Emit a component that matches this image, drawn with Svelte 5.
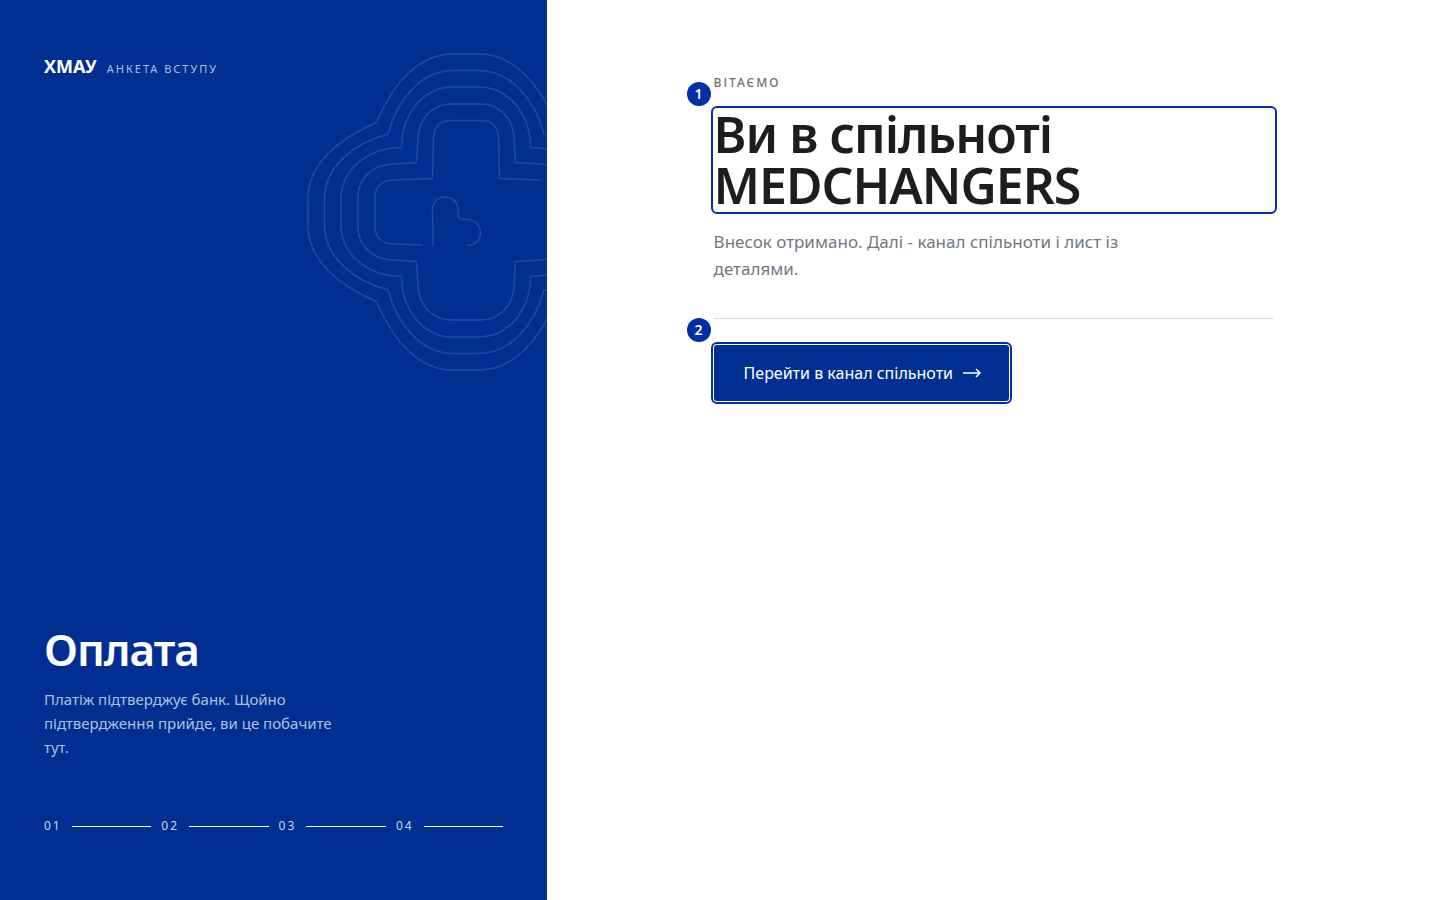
<script lang="ts">
  const steps = ['01', '02', '03', '04'];

  // one quarter of each closed ring, mirrored into the other three
  const rings = [
    'M-158 0V-13C-158-48-128-73-89.5-89.5C-73-128-48-158-13-158H0',
    'M-141.5 0V-13C-141.5-45-112-69-78-78C-69-112-45-141.5-13-141.5H0',
    'M-125 0V-13C-125-42-99-64-64.5-64.5C-64-99-42-125-13-125H0',
    'M-108 0V-15C-108-33-94-47-74-48L-49.5-49.5L-48-74C-47-94-33-108-15-108H0',
  ];
  const mirrors = ['1 1', '-1 1', '1 -1', '-1 -1'];
</script>

<div class="layout">
  <aside class="panel">
    <svg class="mark" viewBox="-159 -159 318 318" aria-hidden="true">
      {#each mirrors as mirror}
        <g transform="scale({mirror})">
          {#each rings as d}
            <path {d} />
          {/each}
        </g>
      {/each}
      <path d="M-43.5 33L-74 32C-84 31.500-91 25-91 15V-15C-91-25-84-31.500-74-32L-33.500-33.500L-32.500-74C-32-85-26-91.500-15-91.500H15C26-91.500 32-85 32.500-74L33.500-33.500L74.500-32" />
      <path d="M-33 33.500L-33.500-2C-33.500-10-28-15-21-15C-13-15-8-9-8-2V2C-8 6-6 8-2 7.500C7 6 14.500 12 14.500 20.500C14.500 28 9 33 1 33.500" />
    </svg>

    <header class="brand">
      <span class="brand-name">ХМАУ</span>
      <span class="brand-note">АНКЕТА ВСТУПУ</span>
    </header>

    <div class="stage">
      <h2>Оплата</h2>
      <p>Платіж підтверджує банк. Щойно підтвердження прийде, ви це побачите тут.</p>
      <ol class="steps">
        {#each steps as step}
          <li>{step}</li>
        {/each}
      </ol>
    </div>
  </aside>

  <main class="content">
    <div class="column">
      <p class="eyebrow">ВІТАЄМО</p>
      <div class="marked">
        <span class="badge">1</span>
        <h1>Ви в спільноті MEDCHANGERS</h1>
      </div>
      <p class="lead">Внесок отримано. Далі - канал спільноти і лист із деталями.</p>
      <div class="actions">
        <div class="marked">
          <span class="badge">2</span>
          <a class="cta" href="#channel">
            Перейти в канал спільноти
            <svg viewBox="0 0 18 10" width="18" height="10" aria-hidden="true">
              <path d="M0 5H17M13 1L17 5L13 9" />
            </svg>
          </a>
        </div>
      </div>
    </div>
  </main>
</div>

<style>
  :global(body) {
    margin: 0;
    background: #fff;
  }
  .layout {
    display: grid;
    grid-template-columns: 38% 1fr;
    min-height: 100vh;
    font-family: 'Noto Sans', 'Open Sans', sans-serif;
    color: #1d1d1b;
  }
  h1, h2, p, ol {
    margin: 0;
  }

  .panel {
    position: relative;
    overflow: hidden;
    box-sizing: border-box;
    display: flex;
    flex-direction: column;
    justify-content: space-between;
    padding: 52px 44px 64px;
    background: #002f91;
    color: #fff;
  }
  .mark {
    position: absolute;
    top: 53px;
    right: -78px;
    width: 318px;
    height: 318px;
    fill: none;
    stroke: #fff;
    stroke-width: 1.5;
    opacity: 0.13;
  }
  .brand {
    display: flex;
    align-items: baseline;
    gap: 10px;
    line-height: 28px;
  }
  .brand-name {
    font-size: 18px;
    font-weight: 700;
  }
  .brand-note {
    font-size: 11px;
    letter-spacing: 2px;
    color: rgba(255, 255, 255, 0.7);
  }
  h2 {
    font-size: 44px;
    line-height: 48px;
    font-weight: 600;
    letter-spacing: -1px;
  }
  .stage p {
    max-width: 300px;
    margin-top: 14px;
    font-size: 15px;
    line-height: 24px;
    color: rgba(255, 255, 255, 0.7);
  }
  .steps {
    display: flex;
    gap: 10px;
    margin-top: 57px;
    padding: 0;
    list-style: none;
    font-size: 12px;
    line-height: 20px;
    letter-spacing: 2px;
    color: rgba(255, 255, 255, 0.8);
  }
  .steps li {
    flex: 1;
    display: flex;
    align-items: center;
    gap: 10px;
  }
  .steps li::after {
    content: '';
    flex: 1;
    height: 1px;
    background: #fff;
  }

  .content {
    padding: 73px 44px;
  }
  .column {
    max-width: 560px;
    margin: 0 auto;
  }
  .eyebrow {
    margin-bottom: 16px;
    font-size: 12px;
    line-height: 20px;
    font-weight: 500;
    letter-spacing: 2px;
    color: #6b6f78;
  }
  .marked {
    position: relative;
  }
  .badge {
    position: absolute;
    right: 100%;
    bottom: 100%;
    width: 24px;
    height: 24px;
    margin: 0 3px 3px 0;
    border-radius: 50%;
    background: #002fa7;
    color: #fff;
    font-size: 14px;
    line-height: 24px;
    font-weight: 600;
    text-align: center;
  }
  h1, .cta {
    outline: 2px solid #002fa7;
    outline-offset: 1px;
    border-radius: 3px;
  }
  h1 {
    font-size: 50px;
    line-height: 51px;
    font-weight: 600;
    letter-spacing: -1px;
  }
  .lead {
    max-width: 440px;
    margin-top: 17px;
    font-size: 17px;
    line-height: 27px;
    color: #73777f;
  }
  .actions {
    display: flex;
    margin-top: 36px;
    padding-top: 26px;
    border-top: 1px solid #d9d9d9;
  }
  .cta {
    display: flex;
    align-items: center;
    gap: 10px;
    height: 56px;
    padding: 0 28px 0 30px;
    background: #002f91;
    color: #fff;
    font-size: 16px;
    text-decoration: none;
  }
  .cta svg {
    fill: none;
    stroke: #fff;
    stroke-width: 1.5;
  }

  @media (max-width: 800px) {
    .layout {
      grid-template-columns: 1fr;
    }
    .stage {
      margin-top: 96px;
    }
  }
</style>
